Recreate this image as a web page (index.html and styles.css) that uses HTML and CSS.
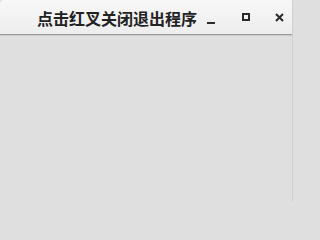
FILE: index.html
```html
<!DOCTYPE html>
<html lang="zh">
<head>
<meta charset="utf-8">
<link rel="stylesheet" href="styles.css">
</head>
<body>
<div class="window">
  <div class="titlebar">
    <div class="title">点击红叉关闭退出程序</div>
    <div class="controls">
      <span class="btn min"><span class="min-bar"></span></span>
      <span class="btn max"><span class="max-box"></span></span>
      <span class="btn close">
        <svg width="9" height="9" viewBox="0 0 9 9"><path d="M1 1 L8 8 M8 1 L1 8" stroke="#2b2b2b" stroke-width="2" fill="none"/></svg>
      </span>
    </div>
  </div>
  <div class="content"></div>
</div>
</body>
</html>
```
FILE: styles.css
```css
html, body {
  margin: 0;
  padding: 0;
  width: 293px;
  height: 201px;
  overflow: hidden;
  background: #dfdfdf;
}
.window {
  display: flex;
  flex-direction: column;
  height: 201px;
  border-right: 1px solid #cfcfcf;
  box-sizing: border-box;
}
.titlebar {
  height: 34px;
  flex: none;
  display: flex;
  align-items: center;
  background: linear-gradient(#f7f7f7, #ededed);
  border-bottom: 1px solid #9c9c9c;
  box-shadow: 0 1px 0 #c9c9c9;
  border-top-left-radius: 4px;
}
.title {
  margin-left: 37px;
  font-family: "Noto Sans CJK SC", sans-serif;
  font-weight: bold;
  font-size: 16px;
  line-height: 16px;
  color: #222222;
  margin-top: 1px;
}
.controls {
  display: flex;
  align-items: center;
  margin-left: 10px;
}
.btn {
  display: flex;
  align-items: center;
  justify-content: center;
}
.min {
  width: 8px;
  height: 17px;
  align-items: flex-end;
}
.min-bar {
  display: block;
  width: 8px;
  height: 2px;
  background: #2b2b2b;
  margin-bottom: 2px;
}
.max {
  margin-left: 27px;
}
.max-box {
  display: block;
  width: 4px;
  height: 4px;
  border: 2px solid #2b2b2b;
}
.close {
  margin-left: 25px;
}
.close svg {
  display: block;
}
.content {
  flex: 1;
  background: #dfdfdf;
  margin-top: 1px;
}
```
